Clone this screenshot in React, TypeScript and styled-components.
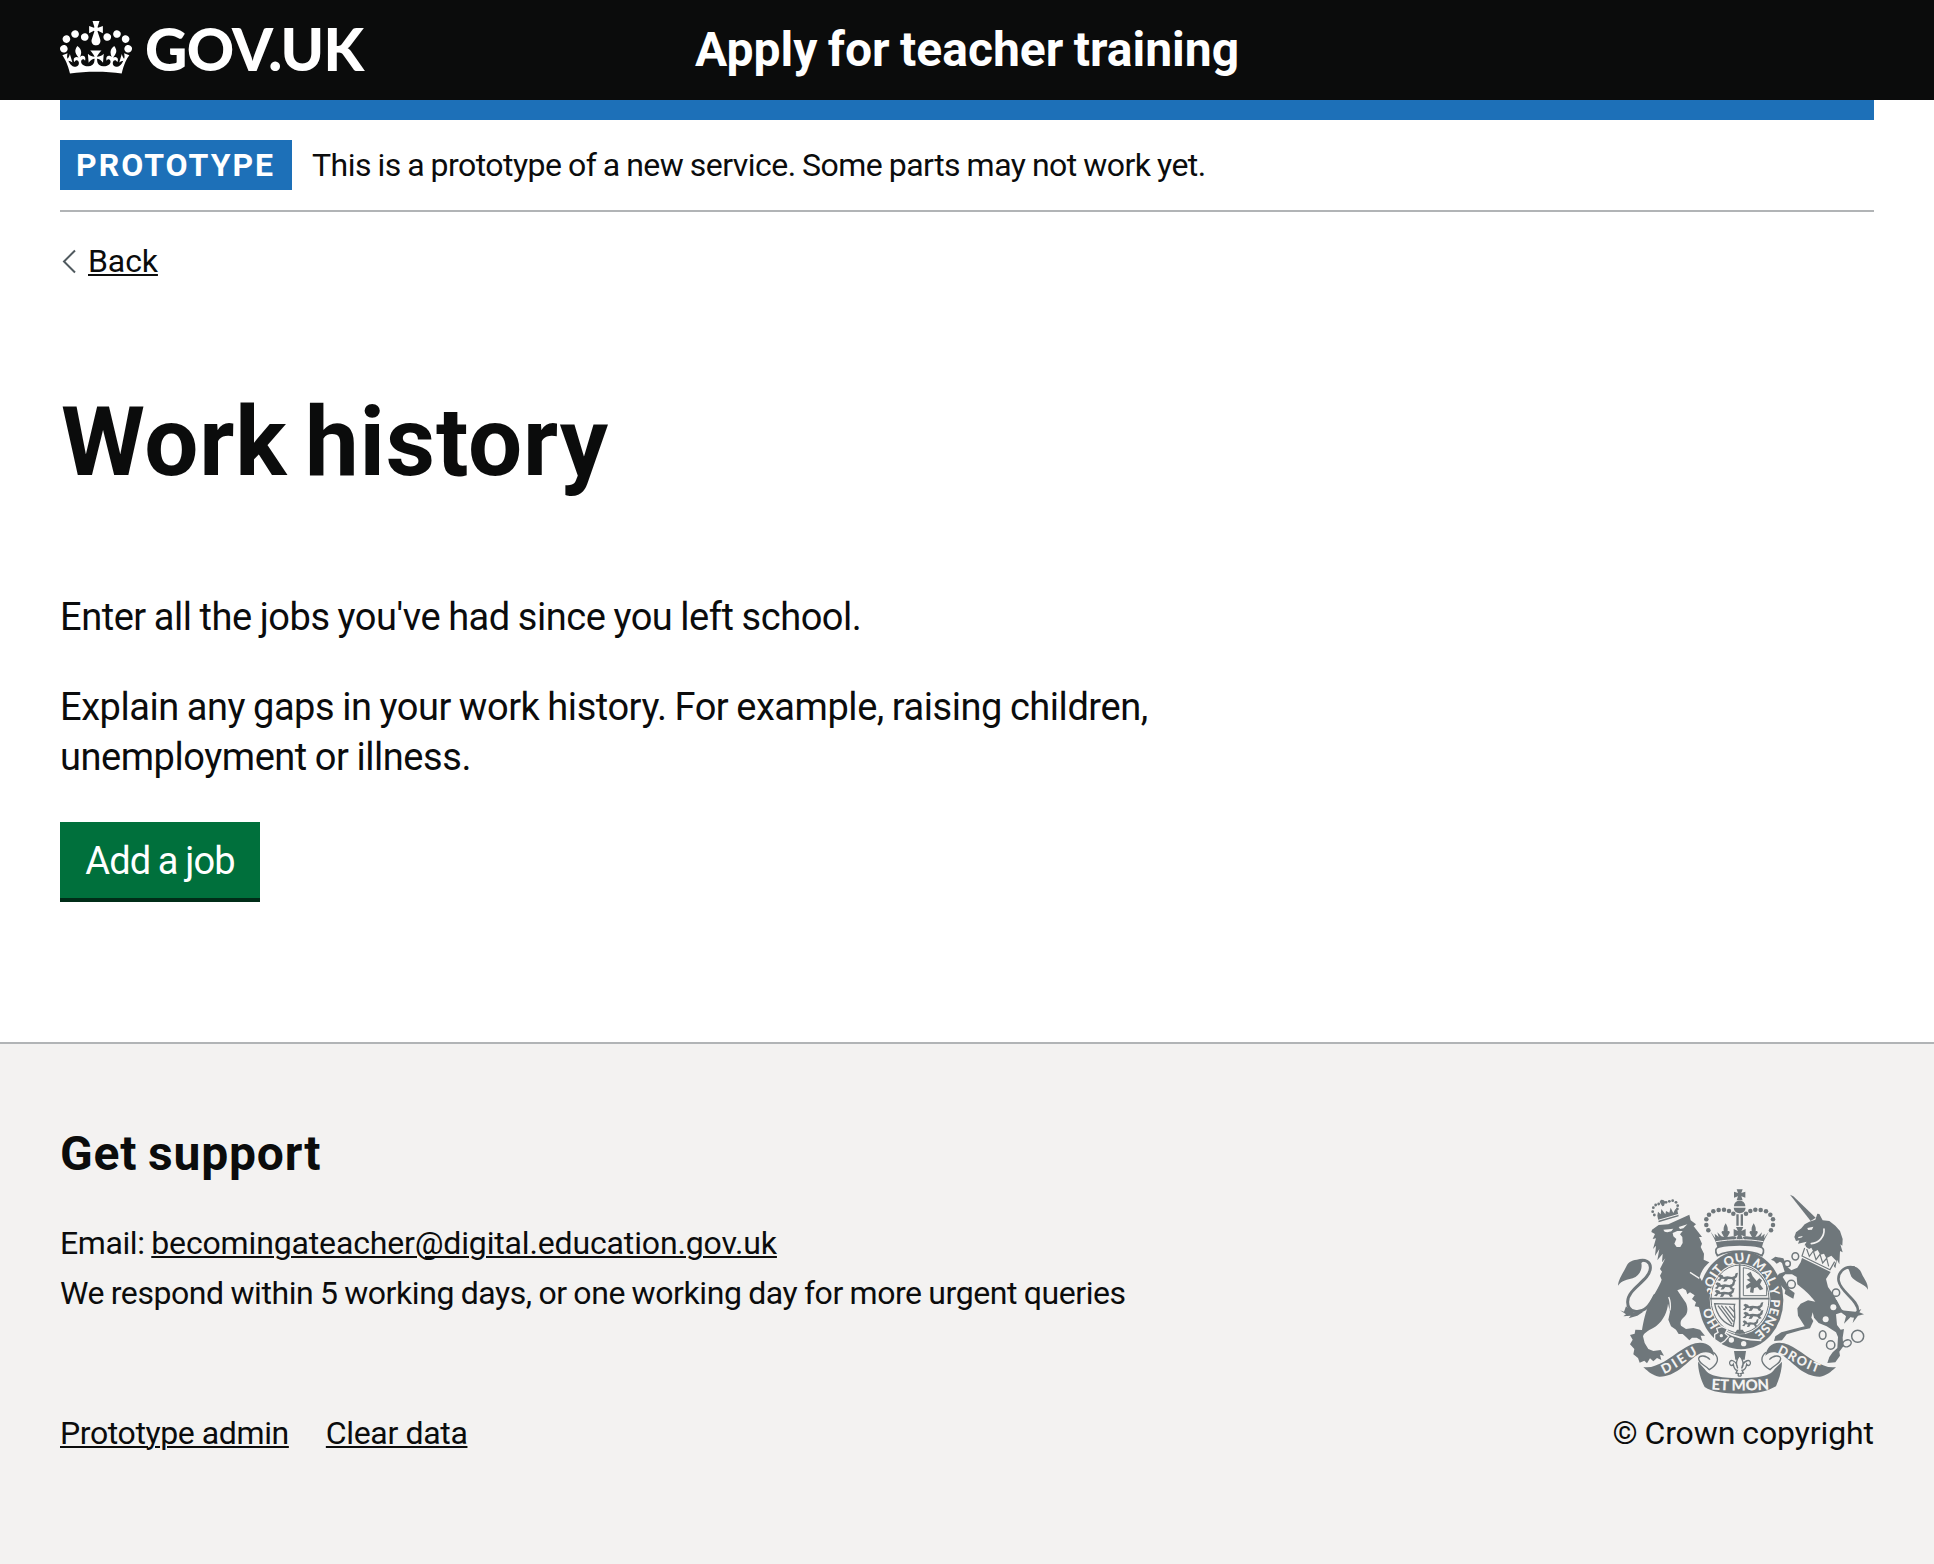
import React from 'react';
import styled, { createGlobalStyle } from 'styled-components';

const ink = '#0b0c0c';
const blue = '#1d70b8';
const rule = '#b1b4b6';
const paper = '#f3f2f1';
const crest = '#6f777b';

const GlobalStyle = createGlobalStyle`
  *, *::before, *::after { box-sizing: border-box; }
  body {
    margin: 0;
    background: ${paper};
    color: ${ink};
    font-family: Roboto, 'Liberation Sans', sans-serif;
    -webkit-font-smoothing: antialiased;
  }
`;

const Page = styled.div`
  display: flex;
  flex-direction: column;
  min-height: 1564px;
  background: #fff;
`;

const Header = styled.header`
  display: grid;
  grid-template-columns: 635px 1fr;
  align-items: start;
  height: 100px;
  padding: 0 60px;
  background: ${ink};
  color: #fff;
`;

const LogoLink = styled.a`
  display: flex;
  gap: 13px;
  padding-top: 21px;
  color: inherit;
  text-decoration: none;
`;

const Logotype = styled.span`
  margin-top: -2px;
  font: 900 58.5px/58px Lato, sans-serif;
  letter-spacing: -0.7px;
`;

const ServiceName = styled.span`
  padding-top: 20px;
  font-size: 48px;
  font-weight: 700;
  line-height: 60px;
  word-spacing: -1.5px;
`;

const Container = styled.div`
  margin: 0 60px;
`;

const PhaseBanner = styled.div`
  display: flex;
  gap: 20px;
  height: 112px;
  padding-top: 20px;
  border-top: 20px solid ${blue};
  border-bottom: 2px solid ${rule};
`;

const Tag = styled.strong`
  width: 232px;
  height: 50px;
  padding-left: 16px;
  background: ${blue};
  color: #fff;
  font-size: 32px;
  line-height: 50px;
  letter-spacing: 2px;
`;

const Text = styled.span<{ $track: number }>`
  font-size: 32px;
  line-height: 50px;
  letter-spacing: ${(p) => p.$track}px;
  word-spacing: -0.85px;
  white-space: nowrap;
`;

const Link = styled.a<{ $track?: number }>`
  color: ${ink};
  font-size: 32px;
  line-height: 50px;
  letter-spacing: ${(p) => p.$track ?? 0}px;
  white-space: nowrap;
  text-decoration: underline;
  text-decoration-thickness: 2px;
  text-underline-offset: 2px;
`;

const BackRow = styled.div`
  display: flex;
  align-items: center;
  height: 50px;
  margin-top: 24px;
`;

const Chevron = styled.svg`
  width: 28px;
  height: 26px;
`;

const Main = styled.main`
  padding: 106px 0 144px;
`;

const Title = styled.h1`
  margin: 0 0 100px 1px;
  font-size: 96px;
  font-weight: 700;
  line-height: 100px;
  letter-spacing: 0.8px;
  word-spacing: -7px;
`;

const Paragraph = styled.p`
  width: 1200px;
  margin: 0 0 40px;
  font-size: 38px;
  line-height: 50px;
  letter-spacing: -0.45px;
  word-spacing: -1px;
`;

const Button = styled.button`
  display: block;
  width: 200px;
  height: 76px;
  padding: 1px 0 0;
  border: 0;
  background: #00703c;
  box-shadow: 0 4px 0 #002d18;
  color: #fff;
  font-family: inherit;
  font-size: 38px;
  line-height: 50px;
  letter-spacing: -0.85px;
  word-spacing: -1px;
`;

const Footer = styled.footer`
  display: flex;
  flex: 1;
  justify-content: space-between;
  padding: 80px 60px 0;
  border-top: 2px solid ${rule};
  background: ${paper};
`;

const Support = styled.div`
  display: flex;
  flex-direction: column;
`;

const SupportTitle = styled.h2`
  margin: 0 0 34px;
  font-size: 48px;
  font-weight: 700;
  line-height: 60px;
  letter-spacing: 0.8px;
  word-spacing: -2px;
`;

const SupportLine = styled.div`
  height: 50px;
  white-space: pre;
`;

const FooterLinks = styled.nav`
  display: flex;
  gap: 37px;
  margin-top: 90px;
`;

const Copyright = styled.div`
  display: flex;
  flex-direction: column;
  align-items: flex-end;
  padding-top: 65px;
`;

const Arms = styled.svg`
  width: 250px;
  height: 205px;
  margin: 0 6px 14px 0;
`;

function Crown() {
  return (
    <svg width="72" height="53" viewBox="0 0 132 97" aria-hidden="true">
      <path
        fill="currentColor"
        fillRule="evenodd"
        d="M25 30.2c3.5 1.5 7.7-.2 9.1-3.7 1.5-3.6-.2-7.8-3.9-9.2-3.6-1.4-7.6.3-9.1 3.9-1.4 3.5.3 7.5 3.9 9zM9 39.5c3.6 1.5 7.8-.2 9.2-3.7 1.5-3.6-.2-7.8-3.9-9.1-3.6-1.5-7.6.2-9.1 3.8-1.4 3.5.3 7.5 3.8 9zM4.4 57.2c3.5 1.5 7.7-.2 9.1-3.8 1.5-3.6-.2-7.7-3.9-9.1-3.5-1.5-7.6.3-9.1 3.8-1.4 3.5.3 7.6 3.9 9.1zm38.3-21.4c3.5 1.5 7.7-.2 9.1-3.8 1.5-3.6-.2-7.7-3.9-9.1-3.6-1.5-7.6.3-9.1 3.8-1.3 3.6.4 7.7 3.9 9.1zm64.4-5.6c-3.6 1.5-7.8-.2-9.1-3.7-1.5-3.6.2-7.8 3.8-9.2 3.6-1.4 7.7.3 9.2 3.9 1.3 3.5-.4 7.5-3.9 9zm15.9 9.3c-3.6 1.5-7.7-.2-9.1-3.7-1.5-3.6.2-7.8 3.7-9.1 3.6-1.5 7.7.2 9.2 3.8 1.5 3.5-.3 7.5-3.8 9zm4.7 17.7c-3.6 1.5-7.8-.2-9.2-3.8-1.5-3.6.2-7.7 3.9-9.1 3.6-1.5 7.7.3 9.2 3.8 1.3 3.5-.4 7.6-3.9 9.1zM89.3 35.8c-3.6 1.5-7.8-.2-9.2-3.8-1.4-3.6.2-7.7 3.9-9.1 3.6-1.5 7.7.3 9.2 3.8 1.4 3.6-.3 7.7-3.9 9.1zM69.7 17.7l8.9 4.7V9.3l-8.9 2.8c-.2-.3-.5-.6-.9-.9L72.4 0H59.6l3.5 11.2c-.3.3-.6.5-.9.9l-8.8-2.8v13.1l8.8-4.7c.3.3.6.7.9.9l-5 15.4v.1c-.2.8-.4 1.6-.4 2.4 0 4.1 3.1 7.5 7 8.1h.2c.3 0 .7.1 1 .1.4 0 .7 0 1-.1h.2c4-.6 7.1-4.1 7.1-8.1 0-.8-.1-1.7-.4-2.4V34l-5.1-15.4c.4-.2.7-.6 1-.9zM66 92.8c16.9 0 32.8 1.1 47.1 3.2 4-16.9 8.9-26.7 14-33.5l-9.6-3.4c1 4.9 1.1 7.2 0 10.2-1.5-1.4-3-4.3-4.2-8.7L108.6 76c2.8-2 5-3.2 7.5-3.3-4.4 9.4-10 11.9-13.6 11.2-4.3-.8-6.3-4.6-5.6-7.9 1-4.7 5.7-5.9 8-.5 4.3-8.7-3-11.4-7.6-8.8 7.1-7.2 7.9-13.5 2.1-21.1-8 6.1-8.1 12.3-4.5 20.8-4.7-5.4-12.1-2.5-9.5 6.2 3.4-5.2 7.9-2 7.2 3.1-.6 4.3-6.4 7.8-13.5 7.2-10.3-.9-10.9-8-11.2-13.8 2.5-.5 7.1 1.8 11 7.3L80.2 60c-4.1 4.4-8 5.3-12.3 5.4 1.4-4.4 8-11.6 8-11.6H55.5s6.4 7.2 7.9 11.6c-4.2-.1-8-1-12.3-5.4l1.4 16.4c3.9-5.5 8.5-7.7 10.9-7.3-.3 5.8-.9 12.8-11.1 13.8-7.2.6-12.9-2.9-13.5-7.2-.7-5 3.8-8.3 7.1-3.1 2.7-8.7-4.6-11.6-9.4-6.2 3.7-8.5 3.6-14.7-4.6-20.8-5.8 7.6-5 13.9 2.2 21.1-4.7-2.6-11.9.1-7.7 8.8 2.3-5.5 7.1-4.2 8.1.5.7 3.3-1.3 7.1-5.7 7.9-3.5.7-9-1.8-13.5-11.2 2.5.1 4.7 1.3 7.5 3.3l-4.7-15.4c-1.2 4.4-2.7 7.2-4.3 8.7-1.1-3-.9-5.3 0-10.2l-9.5 3.4c5 6.9 9.9 16.7 14 33.5 14.8-2.1 30.8-3.2 47.7-3.2z"
      />
    </svg>
  );
}

const archPearls = [
  [325, 152], [319, 136], [319, 119], [327, 105], [340, 95], [356, 91], [372, 90], [387, 94], [400, 102],
];

const lionPearls = [
  [163, 106], [158, 96], [160, 84], [167, 76], [176, 73], [198, 68], [208, 65], [218, 63], [228, 68], [233, 78], [232, 88],
];

/* One lion passant, reused in rows inside the shield quarters. */
const passant =
  'M0 4L6 0L14 3L17 8L28 6L42 8L50 5L53 -3L60 -5L57 8L50 14L55 20L47 22L42 15L30 14L25 21L16 22L20 14L11 13L6 20L-2 18L6 11Z';

function PearlArch() {
  return (
    <g>
      {archPearls.map(([x, y]) => (
        <circle key={`${x}-${y}`} cx={x} cy={y} r="6.8" />
      ))}
      <path d="M332 156L346 176L344 162L356 172L352 158L364 170L372 172L367 163C362 158 366 152 371 155C370 146 371 141 377 131C383 141 384 146 383 155C388 152 392 158 387 163L382 172L398 170L410 172L406 180L420 182V204H352C350 188 342 176 332 156Z" />
    </g>
  );
}

function StateCrown() {
  return (
    <g>
      <PearlArch />
      <g transform="translate(838 0) scale(-1 1)"><PearlArch /></g>
      <path d="M410 29H428L424 40L436 36V54L424 50L428 62H410L414 50L402 54V36L414 40ZM402 80C402 58 436 58 436 80ZM401 84H437C436 94 430 100 419 101C408 100 402 94 401 84Z" />
      <path d="M409 104H416V138H409ZM422 104H429V138H422ZM408 142H430L424 154L437 148V172L424 166L430 182H408L414 166L401 172V148L414 154Z" />
      <path fill="none" stroke={paper} strokeWidth="3" d="M348 186C392 178 446 178 490 186" />
      <path fill={paper} stroke={crest} strokeWidth="5" d="M358 202C392 194 446 194 480 202C492 204 494 214 486 228C450 210 388 210 352 228C344 214 346 204 358 202Z" />
    </g>
  );
}

function Lion() {
  return (
    <g>
      <path d="M156 150L176 136L205 134L240 118L268 105L272 122L288 134L281 140L294 156L306 172L297 172L306 192L302 202L312 222L311 240L328 248C312 262 304 275 299 292L316 322C326 345 331 365 327 380L318 374L320 388L308 383L302 390L296 382L284 380L288 368L276 358L284 347L270 338L262 344L258 332L248 326L232 332L244 350L258 370C266 390 262 405 250 414C242 420 240 430 243 438L258 448L280 445L300 450L315 468L302 468L307 484L290 474L276 474L268 482L258 472L248 463L236 463L228 450L213 440L205 420L210 396L204 372C202 395 192 420 168 440C148 452 133 458 129 470L134 490L145 508L160 514L182 511L192 528L180 525L184 541L171 535L160 545L150 536L141 551L133 543L119 549L114 535L100 524L103 508L90 494L98 480L90 466L104 462L106 450L126 451C130 425 138 390 148 372C160 345 178 322 185 300L180 288L186 276L180 268L196 236L186 248L188 222L172 242L178 208L165 229L168 198L159 208L168 176L158 178L165 163L154 157Z" />
      <path fill={paper} d="M190 150L206 149L220 147L214 155L202 158L194 156ZM236 142L262 134L250 146L240 148ZM218 160L232 154L248 154L240 164L247 172L248 190L241 202L230 202L223 192L229 178L220 170Z" />
      <path fill="none" stroke={paper} strokeWidth="4" d="M270 278L298 296M206 352C212 366 212 380 210 392" />
      <path d="M172 108L176 128L236 110L232 92L226 88L220 100L212 84L208 99L198 94L196 104L184 88L182 104L174 96Z" />
      <path fill="none" stroke={paper} strokeWidth="3" d="M174 122L236 104" />
      {lionPearls.map(([x, y]) => (
        <circle key={`${x}-${y}`} cx={x} cy={y} r="4.2" />
      ))}
      <path d="M183 60L190 61L196 66L192 78L187 80L182 72L179 66Z" />
      <path fill="none" stroke={crest} strokeWidth="9" strokeLinecap="round" d="M112 245C134 236 153 246 151 266C148 304 84 326 83 366C82 402 122 400 140 384C150 375 158 360 164 348" />
      <path d="M134 242C108 238 88 242 80 258C68 284 56 296 54 318C66 302 82 300 98 296C118 290 128 268 124 250ZM78 380L72 396L60 392L78 404L70 410L92 408L86 416L112 408L130 396L100 398Z" />
    </g>
  );
}

function Unicorn() {
  return (
    <g>
      <path d="M570 45L580 50L647 114L632 124Z" />
      <path d="M628 126L646 120L652 102L658 103L668 122L688 124L706 138L720 154L728 178L727 198L721 194L728 218L720 214L718 254L711 240L706 266L690 244L676 240L650 220L624 206L612 198L620 186L604 190L594 192L598 182L588 184L583 172L588 158L604 146L614 134Z" />
      <path fill={paper} d="M622 145L640 141L636 150L624 151ZM594 172L608 169L606 173L596 176Z" />
      <path fill="none" stroke={paper} strokeWidth="5" strokeLinecap="round" d="M672 148C674 172 656 190 634 192" />
      <path fill={paper} d="M614 192L622 211L634 204L641 218L653 211L661 225L672 222L679 236L694 228L709 244L692 276L602 234Z" />
      <path fill="none" stroke={crest} strokeWidth="3.5" d="M614 205L606 229L690 270L704 246M620 208L628 230L640 214L648 240L660 224L668 250L680 236L686 260" />
      <path d="M606 235L692 277L678 298L684 322L704 350L716 378L726 398L708 404L711 436L722 450L732 448L728 474L730 500L718 516L720 528L706 548L682 550L688 532L698 518L712 505L714 472L708 458L680 440L656 430L642 414L638 398L634 414L640 424L630 446L602 452L560 464L546 482L522 484L526 470L544 458L590 446L614 440L604 424L594 408L592 386L602 372L624 362L646 366C636 354 628 344 612 330L592 314L590 292L576 284L556 284L548 292L558 308L568 328L584 340L580 357L566 350L554 342L556 332L544 318L530 292L537 282L554 276L546 250L540 246L530 252L522 244L513 240L526 231L550 236L562 262L574 272L592 264L602 248Z" />
      <g fill="none" stroke={crest} strokeWidth="4.5">
        <ellipse cx="586" cy="230" rx="10" ry="11" />
        <circle cx="562" cy="252" r="9" fill={paper} />
        <circle cx="574" cy="314" r="12" fill={paper} />
        <circle cx="708" cy="339" r="11" fill={paper} />
        <ellipse cx="668" cy="466" rx="10" ry="13" />
        <circle cx="692" cy="496" r="12.5" />
        <ellipse cx="741" cy="491" rx="13" ry="10" transform="rotate(-25 741 491)" />
        <circle cx="773" cy="470" r="18" />
      </g>
      <g fill={paper}>
        <circle cx="700" cy="383" r="9" />
        <circle cx="677" cy="419" r="9" />
      </g>
      <path fill="none" stroke={crest} strokeWidth="8" d="M764 264C730 256 712 282 716 304C722 338 774 360 774 392C773 412 748 416 722 392L706 362" />
      <path d="M740 262C760 254 780 264 786 284C792 298 804 308 804 330C796 314 772 310 758 296C748 286 752 272 740 262ZM724 392L738 410L732 432L752 412L762 414L758 430L774 408L792 404L778 398L784 388L766 396Z" />
    </g>
  );
}

function Garter() {
  return (
    <g>
      <ellipse cx="423" cy="361" rx="133" ry="153" fill={paper} />
      <ellipse cx="423" cy="361" rx="127" ry="148" />
      <ellipse cx="420" cy="358" rx="91" ry="106" fill={paper} />
      <path fill="none" stroke={crest} strokeWidth="5" d="M419 254V462M330 357H508" />
      <ellipse cx="420" cy="358" rx="87" ry="102" fill="none" stroke={crest} strokeWidth="3" />
      <g transform="translate(354 284)"><path d={passant} /></g>
      <g transform="translate(346 308)"><path d={passant} /></g>
      <g transform="translate(344 330)"><path d={passant} /></g>
      <g transform="translate(430 372)"><path d={passant} /></g>
      <g transform="translate(430 396)"><path d={passant} /></g>
      <g transform="translate(428 422) scale(.8 .9)"><path d={passant} /></g>
      <path fill="none" stroke={crest} strokeWidth="3" d="M430 264V348H500V318C490 290 466 268 430 264Z" />
      <path d="M440 284L452 276L458 290L470 304L478 296L486 302L480 314L490 328L480 332L472 322L462 326L460 340L450 338L452 322L440 328L438 318L452 308L440 300L450 296Z" />
      <path fill="none" stroke={crest} strokeWidth="4" d="M344 372L404 374C398 388 412 400 400 440C372 432 350 408 344 372ZM354 378L396 434M364 378L400 426M376 380L402 414M388 380L404 398" />
      <path d="M404 462H436L428 450H411Z" />
      <path fill="none" stroke={paper} strokeWidth="5" d="M376 456C400 470 430 480 484 482" />
      <path stroke={paper} strokeWidth="4" d="M344 464L354 458L350 446L366 441L382 448L376 462L386 470L374 484L362 492L344 480Z" />
      <g fill={paper}>
        <circle cx="394" cy="481" r="8" />
        <circle cx="431" cy="492" r="8" />
        <circle cx="364" cy="468" r="5" />
      </g>
      <defs>
        <path id="garter-line" d="M423 474A99 114 0 0 1 423 247A99 114 0 0 1 423 474" />
      </defs>
      <text fill={paper} fontFamily="Lato, sans-serif" fontWeight="900" fontSize="38">
        <textPath href="#garter-line" startOffset="76">
          HO<tspan dx="36">SOIT</tspan><tspan dx="10">QUI</tspan><tspan dx="10">MAL</tspan><tspan dx="5">Y</tspan><tspan dx="10">PENSE</tspan>
        </textPath>
      </text>
    </g>
  );
}

function Ribbon() {
  return (
    <g>
      <path d="M130 562C152 566 172 556 192 546C230 524 262 490 300 489C326 489 342 506 342 528C326 512 304 516 286 530C256 552 226 592 178 591C160 588 146 578 130 562Z" />
      <path d="M708 562C686 566 666 556 646 546C608 524 576 490 538 489C512 489 500 506 496 528C512 512 534 516 552 530C582 552 612 592 660 591C678 588 692 578 708 562Z" />
      <path fill="none" stroke={crest} strokeWidth="4" d="M340 518C362 536 352 556 328 570C308 550 296 552 296 536C298 526 318 526 330 540M498 518C476 536 486 556 510 570C530 550 542 552 542 536C540 526 520 526 508 540" />
      <path d="M294 546L314 568C324 586 352 595 419 596C486 595 514 586 524 568L546 546C546 570 538 596 528 620C500 636 470 642 419 642C368 642 336 636 314 622C302 598 294 570 294 546Z" />
      <path d="M402 514H438L434 540H406Z" />
      <path fill={paper} stroke={crest} strokeWidth="4" d="M419 528C406 544 408 556 413 566C410 540 386 536 389 552C391 560 398 558 400 554C402 566 408 572 412 572L408 580L416 582C408 592 430 592 422 582L430 580L426 572C432 572 438 566 440 554C442 558 449 560 451 552C454 536 430 540 425 566C432 556 432 544 419 528Z" />
      <defs>
        <path id="dieu-line" d="M190 584C228 570 258 540 310 516" />
        <path id="droit-line" d="M529 520C570 536 606 566 668 584" />
        <path id="mon-line" d="M326 629Q419 636 514 629" />
      </defs>
      <g fill={paper} fontFamily="Lato, sans-serif" fontWeight="900">
        <text fontSize="40"><textPath href="#dieu-line" startOffset="2" textLength="118">DIEU</textPath></text>
        <text fontSize="38"><textPath href="#droit-line" startOffset="2" textLength="136">DROIT</textPath></text>
        <text fontSize="45"><textPath href="#mon-line" startOffset="8" textLength="174">ET MON</textPath></text>
      </g>
    </g>
  );
}

function RoyalArms() {
  return (
    <Arms viewBox="54 28 750 615" fill={crest} role="img" aria-label="Royal coat of arms">
      <Garter />
      <StateCrown />
      <Lion />
      <Unicorn />
      <Ribbon />
    </Arms>
  );
}

export default function App() {
  return (
    <Page>
      <GlobalStyle />
      <Header>
        <LogoLink href="#">
          <Crown />
          <Logotype>GOV.UK</Logotype>
        </LogoLink>
        <ServiceName>Apply for teacher training</ServiceName>
      </Header>
      <Container>
        <PhaseBanner>
          <Tag>PROTOTYPE</Tag>
          <Text $track={-0.54}>This is a prototype of a new service. Some parts may not work yet.</Text>
        </PhaseBanner>
        <BackRow>
          <Chevron viewBox="0 0 28 26" fill="none" stroke="#505a5f" strokeWidth="2">
            <path d="M15 2.5L4 13.5L15 24.5" />
          </Chevron>
          <Link href="#" $track={-0.1}>Back</Link>
        </BackRow>
        <Main>
          <Title>Work history</Title>
          <Paragraph>Enter all the jobs you've had since you left school.</Paragraph>
          <Paragraph>
            Explain any gaps in your work history. For example, raising children,
            <br />
            unemployment or illness.
          </Paragraph>
          <Button>Add a job</Button>
        </Main>
      </Container>
      <Footer>
        <Support>
          <SupportTitle>Get support</SupportTitle>
          <SupportLine>
            <Text $track={-0.4}>Email: </Text>
            <Link href="#" $track={-0.15}>becomingateacher@digital.education.gov.uk</Link>
          </SupportLine>
          <SupportLine>
            <Text $track={-0.42}>We respond within 5 working days, or one working day for more urgent queries</Text>
          </SupportLine>
          <FooterLinks>
            <Link href="#" $track={-0.4}>Prototype admin</Link>
            <Link href="#" $track={-0.35}>Clear data</Link>
          </FooterLinks>
        </Support>
        <Copyright>
          <RoyalArms />
          <Text $track={-0.1}>© Crown copyright</Text>
        </Copyright>
      </Footer>
    </Page>
  );
}
